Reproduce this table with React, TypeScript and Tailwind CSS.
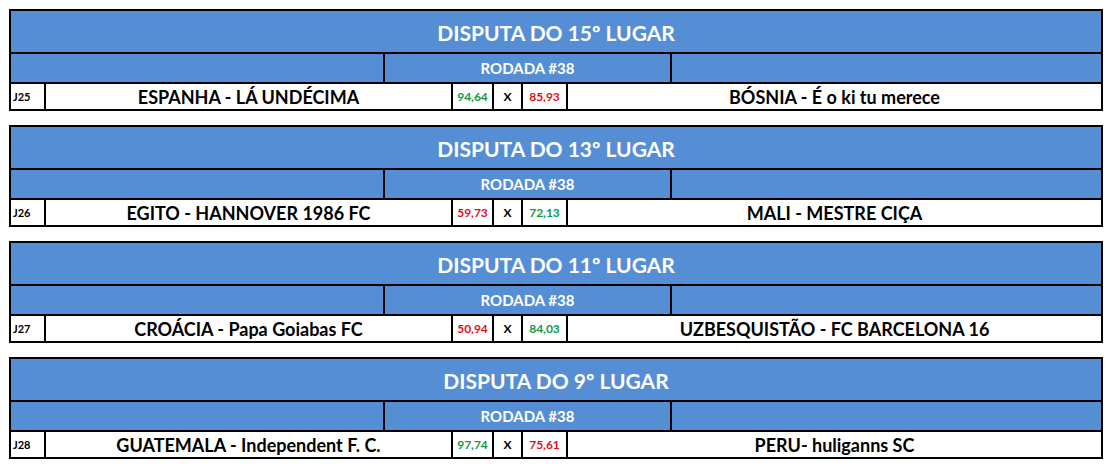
import React from "react";

interface Match {
  title: string;
  code: string;
  home: string;
  away: string;
  homeScore: string;
  awayScore: string;
  homeWins: boolean;
}

const matches: Match[] = [
  {
    title: "DISPUTA DO 15º LUGAR",
    code: "J25",
    home: "ESPANHA - LÁ UNDÉCIMA",
    away: "BÓSNIA - É o ki tu merece",
    homeScore: "94,64",
    awayScore: "85,93",
    homeWins: true,
  },
  {
    title: "DISPUTA DO 13º LUGAR",
    code: "J26",
    home: "EGITO - HANNOVER 1986 FC",
    away: "MALI - MESTRE CIÇA",
    homeScore: "59,73",
    awayScore: "72,13",
    homeWins: false,
  },
  {
    title: "DISPUTA DO 11º LUGAR",
    code: "J27",
    home: "CROÁCIA - Papa Goiabas FC",
    away: "UZBESQUISTÃO - FC BARCELONA 16",
    homeScore: "50,94",
    awayScore: "84,03",
    homeWins: false,
  },
  {
    title: "DISPUTA DO 9º LUGAR",
    code: "J28",
    home: "GUATEMALA - Independent F. C.",
    away: "PERU- huliganns SC",
    homeScore: "97,74",
    awayScore: "75,61",
    homeWins: true,
  },
];

const green = "text-[#0e9a48]";
const red = "text-[#e0101a]";

const MatchBlock: React.FC<{ match: Match }> = ({ match }) => {
  return (
    <div className="w-[1094px] border-2 border-black flex flex-col">
      {/* title */}
      <div className="h-[43px] bg-[#558ed5] flex items-center justify-center border-b-2 border-black pt-[2px]">
        <span className="text-white text-[21px] font-bold leading-none">{match.title}</span>
      </div>

      {/* round */}
      <div className="h-[30px] bg-[#558ed5] flex border-b-2 border-black">
        <div className="w-[374px] border-r-2 border-black" />
        <div className="w-[287px] border-r-2 border-black flex items-center justify-center">
          <span className="text-white text-[15px] font-bold">RODADA #38</span>
        </div>
        <div className="flex-1" />
      </div>

      {/* match row */}
      <div className="h-[25px] bg-white flex items-stretch">
        <div className="w-[35px] border-r-2 border-black flex items-center pl-[2px] pt-[2px]">
          <span className="text-[11px] font-bold text-black">{match.code}</span>
        </div>
        <div className="w-[407px] border-r-2 border-black flex items-center justify-center pt-[2px]">
          <span className="text-[18px] font-bold text-black">{match.home}</span>
        </div>
        <div className="w-[41px] border-r-2 border-black flex items-center justify-center">
          <span className={`text-[12px] font-bold ${match.homeWins ? green : red}`}>
            {match.homeScore}
          </span>
        </div>
        <div className="w-[29px] border-r-2 border-black flex items-center justify-center">
          <span className="text-[12px] font-bold text-black">X</span>
        </div>
        <div className="w-[45px] border-r-2 border-black flex items-center justify-center">
          <span className={`text-[12px] font-bold ${match.homeWins ? red : green}`}>
            {match.awayScore}
          </span>
        </div>
        <div className="flex-1 flex items-center justify-center pt-[2px]">
          <span className="text-[18px] font-bold text-black">{match.away}</span>
        </div>
      </div>
    </div>
  );
};

export default function App() {
  return (
    <div
      className="w-[1118px] h-[466px] bg-white pl-[9px] pt-[9px] flex flex-col gap-[14px]"
      style={{ fontFamily: "Lato, 'Open Sans', sans-serif" }}
    >
      {matches.map((m) => (
        <MatchBlock key={m.code} match={m} />
      ))}
    </div>
  );
}
